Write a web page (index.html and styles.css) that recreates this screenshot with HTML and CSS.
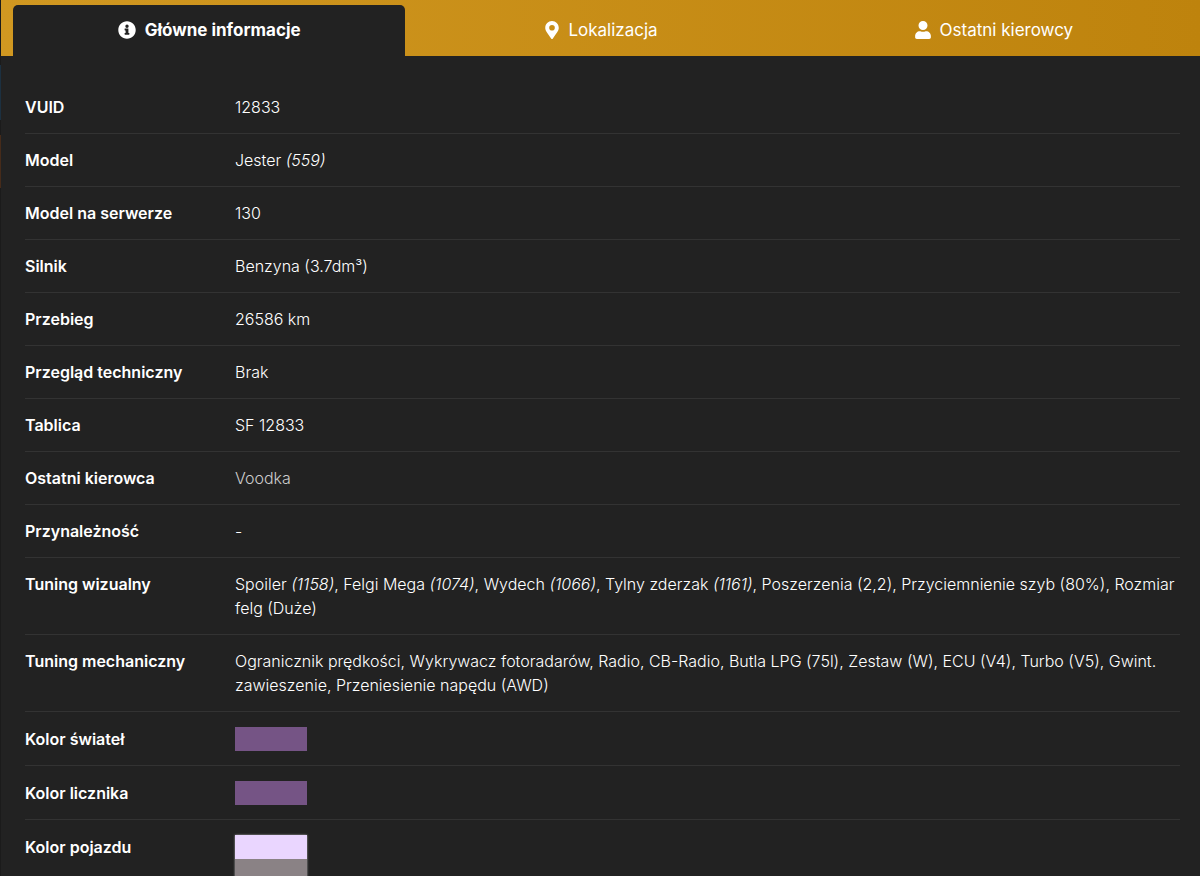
FILE: index.html
```html
<!DOCTYPE html>
<html lang="pl">
<head>
    <meta charset="UTF-8">
    <meta name="viewport" content="width=device-width, initial-scale=1.0">
    <title>Informacje o pojeździe</title>
    <link rel="stylesheet" href="styles.css">
</head>
<body>

    <div class="panel">
        <!-- Tabs -->
        <nav class="tabs">
            <button type="button" class="tab active">
                <svg class="icon" viewBox="0 0 512 512"><path d="M256 8C119 8 8 119 8 256s111 248 248 248 248-111 248-248S393 8 256 8zm0 92a48 48 0 1 1 0 96 48 48 0 0 1 0-96zm68 280c0 6.600-5.400 12-12 12H200c-6.600 0-12-5.400-12-12v-30c0-6.600 5.400-12 12-12h16v-68h-16c-6.600 0-12-5.400-12-12v-30c0-6.600 5.400-12 12-12h84c6.600 0 12 5.400 12 12v110h16c6.600 0 12 5.400 12 12v30z"/></svg>
                Główne informacje
            </button>
            <button type="button" class="tab">
                <svg class="icon icon-pin" viewBox="0 0 384 512"><path d="M172 502C27 291 0 270 0 192 0 86 86 0 192 0s192 86 192 192c0 78-27 99-172 310-10 13-30 13-40 0zm20-230a80 80 0 1 0 0-160 80 80 0 0 0 0 160z"/></svg>
                Lokalizacja
            </button>
            <button type="button" class="tab">
                <svg class="icon icon-user" viewBox="0 0 448 512"><path d="M224 256a128 128 0 1 0 0-256 128 128 0 0 0 0 256zm90 32h-17c-22 10-47 16-73 16s-51-6-73-16h-17C60 288 0 348 0 422v42c0 27 21 48 48 48h352c27 0 48-21 48-48v-42c0-74-60-134-134-134z"/></svg>
                Ostatni kierowcy
            </button>
        </nav>

        <!-- Vehicle details -->
        <div class="content">
            <table class="details">
                <tr><th scope="row">VUID</th><td>12833</td></tr>
                <tr><th scope="row">Model</th><td>Jester <i>(559)</i></td></tr>
                <tr><th scope="row">Model na serwerze</th><td>130</td></tr>
                <tr><th scope="row">Silnik</th><td>Benzyna (3.7dm³)</td></tr>
                <tr><th scope="row">Przebieg</th><td>26586 km</td></tr>
                <tr><th scope="row">Przegląd techniczny</th><td>Brak</td></tr>
                <tr><th scope="row">Tablica</th><td>SF 12833</td></tr>
                <tr><th scope="row">Ostatni kierowca</th><td><a href="#">Voodka</a></td></tr>
                <tr><th scope="row">Przynależność</th><td>-</td></tr>
                <tr>
                    <th scope="row">Tuning wizualny</th>
                    <td>Spoiler <i>(1158)</i>, Felgi Mega <i>(1074)</i>, Wydech <i>(1066)</i>, Tylny zderzak <i>(1161)</i>, Poszerzenia (2,2), Przyciemnienie szyb (80%), Rozmiar felg (Duże)</td>
                </tr>
                <tr>
                    <th scope="row">Tuning mechaniczny</th>
                    <td>Ogranicznik prędkości, Wykrywacz fotoradarów, Radio, CB-Radio, Butla LPG (75l), Zestaw (W), ECU (V4), Turbo (V5), Gwint. zawieszenie, Przeniesienie napędu (AWD)</td>
                </tr>
                <tr class="color-row"><th scope="row">Kolor świateł</th><td><div class="color purple"></div></td></tr>
                <tr class="color-row"><th scope="row">Kolor licznika</th><td><div class="color purple"></div></td></tr>
                <tr class="color-row">
                    <th scope="row">Kolor pojazdu</th>
                    <td>
                        <div class="color-stack">
                            <div class="color lilac"></div>
                            <div class="color gray"></div>
                        </div>
                    </td>
                </tr>
            </table>
        </div>
    </div>

</body>
</html>
```
FILE: styles.css
```css
* {
    box-sizing: border-box;
}

body {
    margin: 0;
    padding-left: 1px;
    height: 100vh;
    overflow: hidden;
    color: #fff;
    font-family: Inter, "Liberation Sans", sans-serif;
    font-size: 16px;
    font-weight: 300;
    line-height: 24px;
    background: #1b1b1b linear-gradient(#1b1b1b 65px, #1c3040 65px 120px, #1b1b1b 120px 135px, #462b1a 135px 188px, #1b1b1b 188px) no-repeat left top / 1px 100%;
}

.panel {
    min-height: 100vh;
    background-color: #222;
}

/* Tabs */
.tabs {
    display: flex;
    padding: 5px 10px 0 12px;
    background: linear-gradient(to right, #d19821, #be830d);
}

.tab {
    flex: 1;
    display: flex;
    align-items: center;
    justify-content: center;
    gap: 9px;
    height: 51px;
    padding: 0 0 2px;
    border: 0;
    border-radius: 5px 5px 0 0;
    background: none;
    color: #fff;
    font-family: inherit;
    font-size: 17px;
    font-weight: 400;
    cursor: pointer;
}

.tab.active {
    background-color: #222;
    font-weight: bold;
}

.icon {
    width: 18px;
    height: 18px;
    fill: currentColor;
}

.icon-pin {
    width: 14px;
}

.icon-user {
    width: 16px;
}

/* Details table */
.content {
    padding: 25px 20px 24px 24px;
}

.details {
    width: 100%;
    border-spacing: 0;
}

.details th,
.details td {
    padding: 14px 0;
    border-bottom: 1px solid #333;
    text-align: left;
    vertical-align: top;
}

.details th {
    width: 210px;
    font-weight: 600;
}

.details a {
    color: #ccc;
    text-decoration: none;
}

.details .color-row th,
.details .color-row td {
    padding-top: 15px;
}

.color {
    width: 72px;
    height: 24px;
}

.color-stack {
    width: 72px;
    box-shadow: 0 0 2px #aaa;
}

.purple {
    background-color: #755485;
}

.lilac {
    background-color: #ead6ff;
}

.gray {
    background-color: #8a8285;
}
```
